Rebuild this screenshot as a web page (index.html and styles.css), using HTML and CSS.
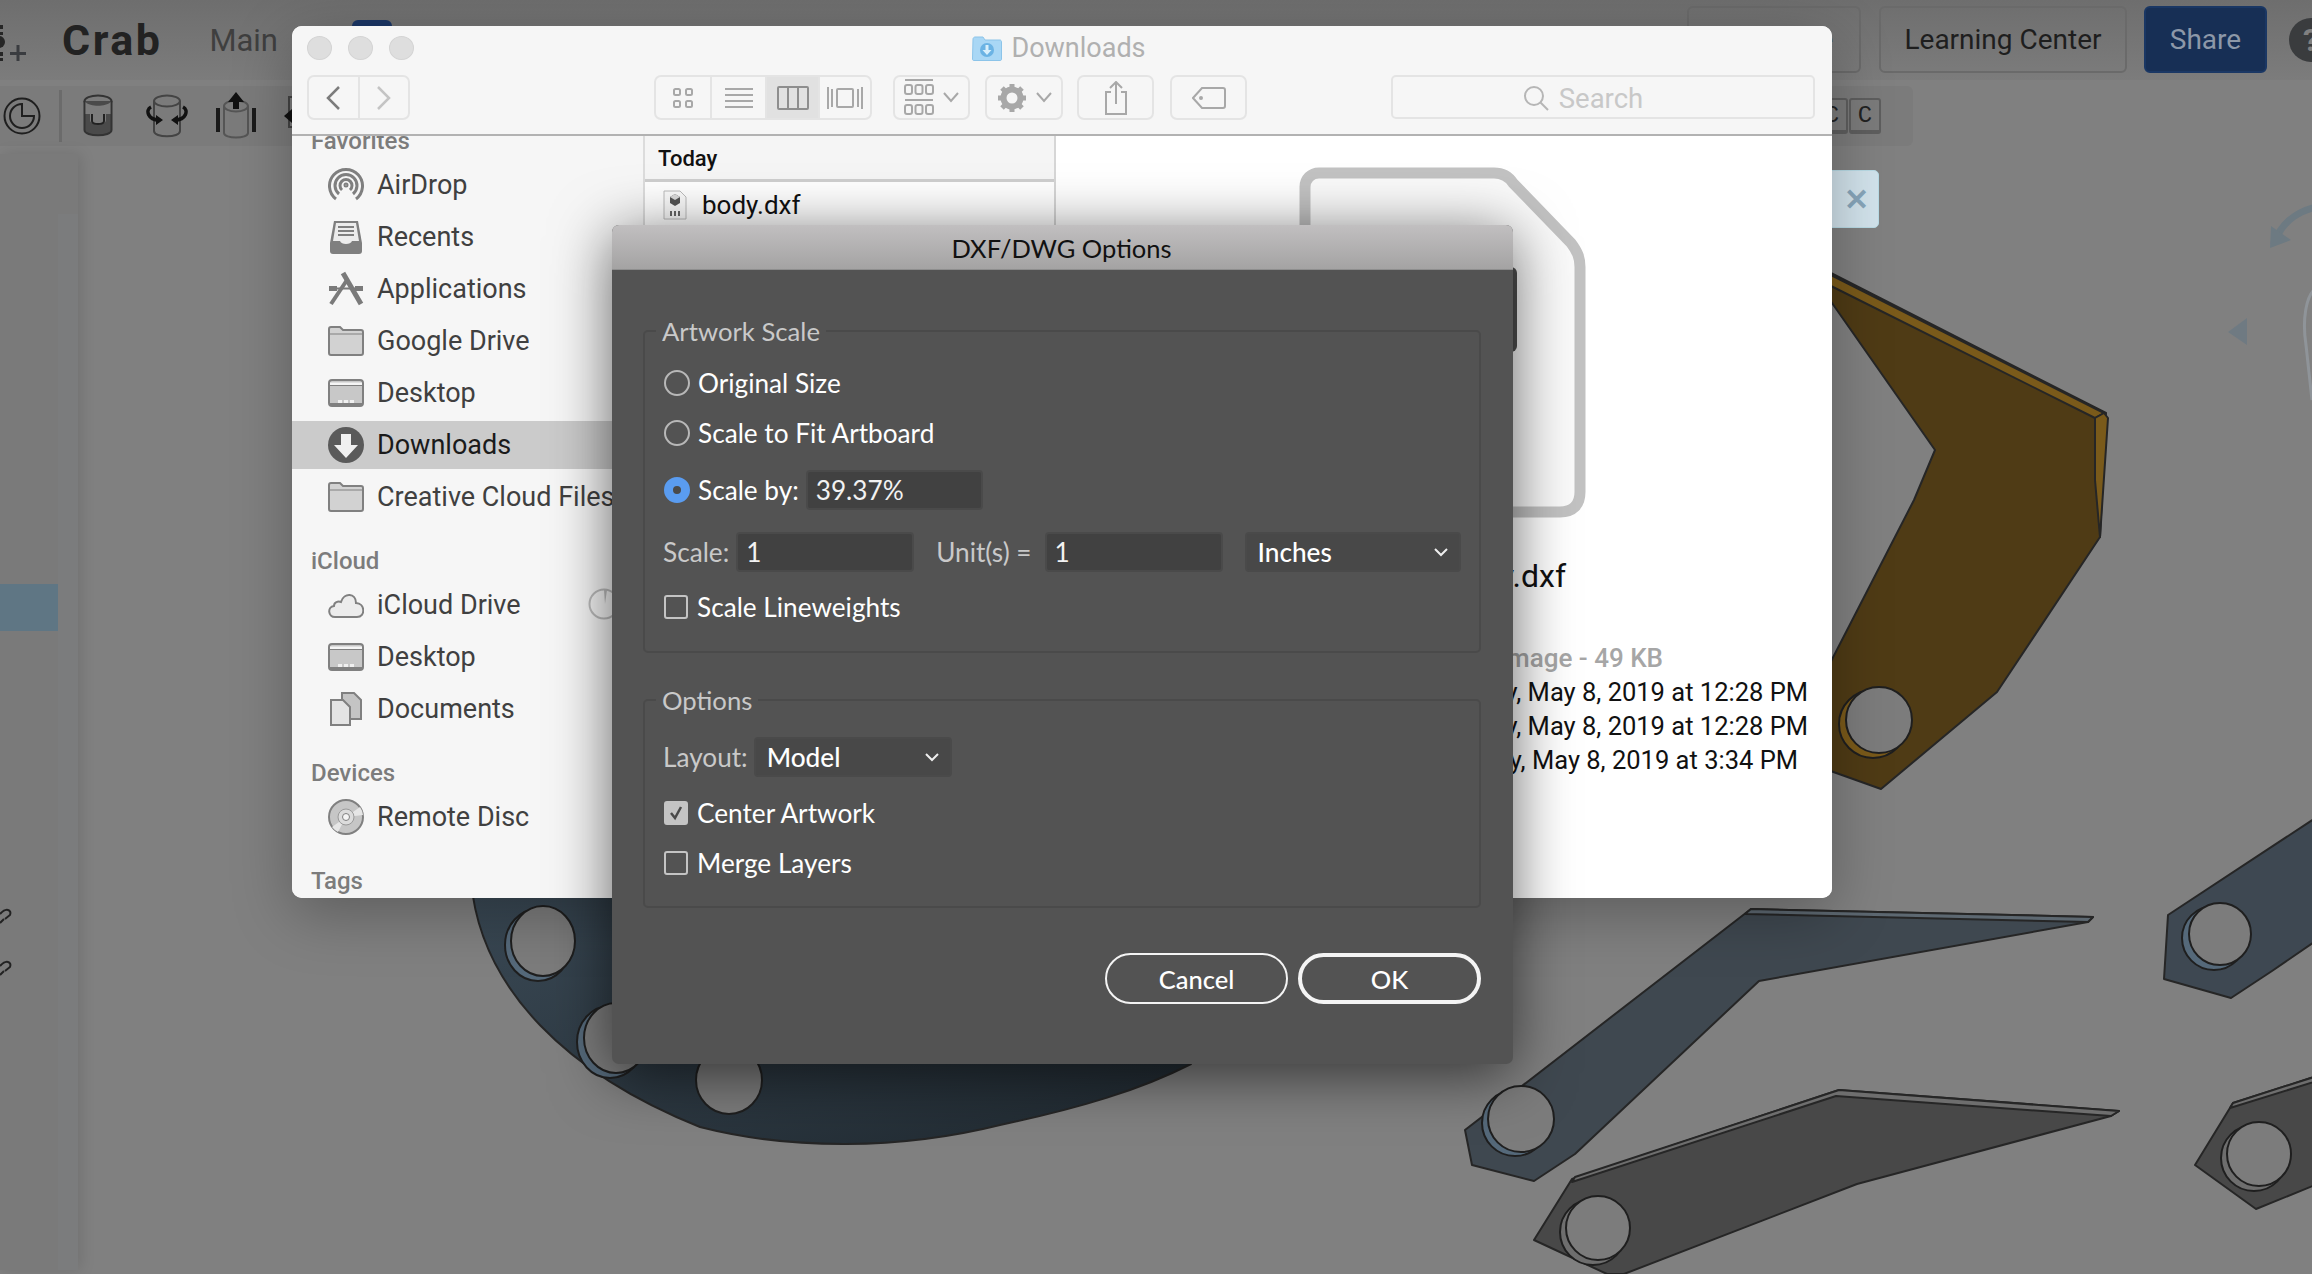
FILE: index.html
```html
<!DOCTYPE html>
<html>
  <head>
    <meta charset="utf-8">
    <title>Crab - DXF/DWG Options</title>
    <link rel="stylesheet" href="styles.css">
  </head>
  <body>
    <div class="app">
      <!-- cad canvas -->
      <svg class="canvas" width="2312" height="1274" viewBox="0 0 2312 1274">
        <defs>
          <linearGradient id="discFill" x1="0" y1="0" x2="1" y2="1">
            <stop offset="0" stop-color="#3b4a56"/>
            <stop offset="1" stop-color="#1f282f"/>
          </linearGradient>
        </defs>
        <path class="edge" fill="url(#discFill)" d="M471 880C480 990 570 1075 700 1127C790 1150 900 1150 1000 1125C1080 1108 1140 1090 1191 1064L1191 880Z"/>
        <ellipse class="crescent" cx="538" cy="945" rx="33" ry="36"/>
        <ellipse class="hole" cx="543" cy="941" rx="32" ry="35"/>
        <ellipse class="crescent" cx="610" cy="1042" rx="33" ry="36"/>
        <ellipse class="hole" cx="616" cy="1038" rx="32" ry="35"/>
        <ellipse class="hole" cx="729" cy="1080" rx="33" ry="34"/>

        <path class="edge" fill="#4f3b15" d="M1825 270L2106 413L2100 537L1997 692L1881 789L1825 769L1825 673L1914 500L1935 450L1825 293Z"/>
        <path class="edge" fill="#7a5a1a" d="M1825 272L2104 413L2095 418L1825 283Z"/>
        <path class="edge" fill="#7a5a1a" d="M2104 413L2108 418L2100 537L2095 480L2095 418Z"/>
        <circle class="crescent crescent-brown" cx="1873" cy="724" r="34"/>
        <circle class="hole" cx="1879" cy="720" r="33"/>

        <path class="edge" fill="#3f4850" d="M1751 909L2093 917L2088 922L1759 981L1575 1154L1534 1181L1472 1165L1465 1130Z"/>
        <path class="edge" fill="#5d6871" d="M1751 909L2093 917L2088 922L1745 914Z"/>
        <circle class="crescent" cx="1515" cy="1123" r="33"/>
        <circle class="hole" cx="1521" cy="1119" r="33"/>

        <path class="edge" fill="#484848" d="M1839 1090L2119 1111L2111 1116L1857 1184L1624 1274L1607 1274L1534 1240L1572 1179Z"/>
        <path class="edge" fill="#6e6e6e" d="M1839 1090L2119 1111L2111 1116L1836 1096L1572 1182L1575 1177Z"/>
        <circle class="crescent crescent-gray" cx="1593" cy="1232" r="33"/>
        <circle class="hole" cx="1598" cy="1228" r="32"/>

        <path class="edge" fill="#3e4852" d="M2320 815L2168 915L2164 979L2231 998L2272 971L2320 938Z"/>
        <circle class="crescent" cx="2214" cy="938" r="32"/>
        <circle class="hole" cx="2220" cy="934" r="31"/>

        <path class="edge" fill="#484848" d="M2320 1075L2233 1103L2195 1165L2256 1209L2320 1183Z"/>
        <path class="edge" fill="#6e6e6e" d="M2320 1075L2233 1103L2230 1108L2320 1080Z"/>
        <circle class="crescent crescent-gray" cx="2254" cy="1158" r="33"/>
        <circle class="hole" cx="2259" cy="1154" r="32"/>

        <!-- view cube bits -->
        <path fill="none" stroke="#6d7a82" stroke-width="7" d="M2316 207C2295 212 2280 225 2274 244"/>
        <path fill="#6d7a82" d="M2270 248L2271 226L2291 240Z"/>
        <path fill="#6f7a82" d="M2228 332L2247 318L2247 345Z"/>
        <path fill="none" stroke="#8f9499" stroke-width="3" d="M2316 288C2306 295 2302 320 2306 345L2312 400"/>
      </svg>

      <header class="topbar">
        <svg class="doc-glyph" width="28" height="62" viewBox="0 0 28 62">
          <circle cx="-1" cy="42" r="6" fill="#262626"/>
          <path d="M0 25h3v4H0zM0 32h3v3H0zM0 52h3v4H0zM0 58h3v3H0z" fill="#262626"/>
          <path d="M10 52h16v3H10zM16.500 45h3v16h-3z" fill="#3a3c40"/>
        </svg>
        <span class="doc-name">Crab</span>
        <span class="doc-branch">Main</span>
        <span class="doc-tab"></span>
        <div class="top-actions">
          <a class="top-btn top-btn-first">Upgrade</a>
          <a class="top-btn top-btn-learn">Learning Center</a>
          <a class="top-btn top-btn-share">Share</a>
          <span class="help">?</span>
        </div>
      </header>

      <div class="toolbar">
        <svg class="tool tool-clock" width="40" height="40" viewBox="0 0 40 40">
          <circle cx="20" cy="20" r="17.500" fill="none" stroke="#1f1f1f" stroke-width="2"/>
          <path d="M20 8A12 12 0 1 0 32 20H20Z" fill="none" stroke="#1f1f1f" stroke-width="2"/>
        </svg>
        <span class="tool-sep"></span>
        <svg class="tool tool-a" width="32" height="44" viewBox="0 0 32 44">
          <ellipse cx="16" cy="7" rx="13.500" ry="5.500" fill="none" stroke="#333" stroke-width="2"/>
          <path d="M2.500 7V36C2.500 43 29.500 43 29.500 36V7" fill="#4a4a4a" stroke="#333" stroke-width="2"/>
          <path d="M3.500 8C8 13 24 13 28.500 8V20H24V26C24 32 8 32 8 26V20H3.500Z" fill="#7c7c7c"/>
          <path d="M10 20V27C10 31 22 31 22 27V20" fill="none" stroke="#222" stroke-width="2"/>
        </svg>
        <svg class="tool tool-b" width="42" height="46" viewBox="0 0 42 46">
          <ellipse cx="21" cy="8" rx="13" ry="5.500" fill="none" stroke="#444" stroke-width="2"/>
          <path d="M8 8V38C8 45 34 45 34 38V8" fill="none" stroke="#444" stroke-width="2"/>
          <path d="M13 27C2 27-1 17 5 14M29 27C40 27 43 17 37 14" fill="none" stroke="#111" stroke-width="3.500"/>
          <path d="M10 22L17 27L10 32ZM32 22L25 27L32 32Z" fill="#111"/>
        </svg>
        <svg class="tool tool-c" width="42" height="48" viewBox="0 0 42 48">
          <ellipse cx="21" cy="14" rx="12" ry="5.500" fill="none" stroke="#555" stroke-width="2"/>
          <path d="M9 14V41C9 47 33 47 33 41V14" fill="none" stroke="#555" stroke-width="2"/>
          <path d="M1 16h4v24H1zM37 16h4v24h-4z" fill="#1a1a1a"/>
          <path d="M21 0L29 10H24V17H18V10H13Z" fill="#111"/>
        </svg>
        <svg class="tool tool-d" width="30" height="40" viewBox="0 0 30 40">
          <path d="M5 1h16v30H5z" fill="none" stroke="#444" stroke-width="2"/>
          <path d="M0 20L8 13V27Z" fill="#111"/>
        </svg>
        <div class="keys">
          <kbd class="key">C</kbd>
          <kbd class="key">C</kbd>
        </div>
      </div>

      <div class="workspace">
        <aside class="side-panel">
          <div class="side-strip"></div>
          <div class="side-active"></div>
          <svg class="side-link side-link-1" width="12" height="18" viewBox="0 0 12 18">
            <path d="M0 7C6 0 12 3 10 8L5 12M0 16L4 12" fill="none" stroke="#222" stroke-width="2"/>
          </svg>
          <svg class="side-link side-link-2" width="12" height="18" viewBox="0 0 12 18">
            <path d="M0 7C6 0 12 3 10 8L5 12M0 16L4 12" fill="none" stroke="#222" stroke-width="2"/>
          </svg>
        </aside>
      </div>

      <div class="notice-close"><span>&#10005;</span></div>

      <!-- finder window -->
      <div class="finder">
        <div class="finder-head">
          <div class="titlerow">
            <div class="lights"><i></i><i></i><i></i></div>
            <svg width="30" height="25" viewBox="0 0 30 25">
              <path d="M1 3C1 2 2 1 3 1H11L13 4H28C29 4 29.500 5 29.500 6V23C29.500 24 29 24.500 28 24.500H2C1 24.500 .5 24 .5 23Z" fill="#a9d7f5" stroke="#8cc4e9"/>
              <circle cx="15" cy="14" r="7" fill="#6bb3e4"/>
              <path d="M13.500 9h3v5h3L15 19L10.500 14h3Z" fill="#d8effc"/>
            </svg>
            <span class="wintitle">Downloads</span>
          </div>
          <div class="tools">
            <div class="seg nav">
              <span class="seg-item nav-btn">
                <svg width="16" height="26" viewBox="0 0 16 26"><path d="M14 2L3 13L14 24" fill="none" stroke="#7c7c7c" stroke-width="2.500"/></svg>
              </span>
              <span class="seg-item nav-btn">
                <svg width="16" height="26" viewBox="0 0 16 26"><path d="M2 2L13 13L2 24" fill="none" stroke="#c4c4c4" stroke-width="2.500"/></svg>
              </span>
            </div>
            <div class="seg views">
              <span class="seg-item view-a">
                <svg width="22" height="22" viewBox="0 0 22 22" fill="none" stroke="#a8a8a8" stroke-width="2"><rect x="2" y="2" width="6" height="6" rx="1.500"/><rect x="14" y="2" width="6" height="6" rx="1.500"/><rect x="2" y="14" width="6" height="6" rx="1.500"/><rect x="14" y="14" width="6" height="6" rx="1.500"/></svg>
              </span>
              <span class="seg-item view-b">
                <svg width="30" height="22" viewBox="0 0 30 22" stroke="#a8a8a8" stroke-width="2"><path d="M1 2h28M1 8h28M1 14h28M1 20h28"/></svg>
              </span>
              <span class="seg-item view-c is-on">
                <svg width="32" height="24" viewBox="0 0 32 24" fill="none" stroke="#8e8e8e" stroke-width="2"><rect x="1" y="1" width="30" height="22" rx="1"/><path d="M11 1v22M21 1v22"/></svg>
              </span>
              <span class="seg-item view-d">
                <svg width="36" height="24" viewBox="0 0 36 24" fill="none" stroke="#a8a8a8" stroke-width="2"><rect x="10" y="3" width="16" height="18" rx="1"/><path d="M1 1v22M5 3v18M35 1v22M31 3v18"/></svg>
              </span>
            </div>
            <div class="seg tool-btn arrange">
              <svg width="30" height="44" viewBox="0 0 30 44" fill="none" stroke="#a8a8a8" stroke-width="2"><path d="M1 4h28M1 24h28"/><rect x="1" y="9" width="7" height="9" rx="2"/><rect x="11.500" y="9" width="7" height="9" rx="2"/><rect x="22" y="9" width="7" height="9" rx="2"/><rect x="1" y="29" width="7" height="9" rx="2"/><rect x="11.500" y="29" width="7" height="9" rx="2"/><rect x="22" y="29" width="7" height="9" rx="2"/></svg>
              <svg width="16" height="11" viewBox="0 0 16 11"><path d="M1 1L8 9L15 1" fill="none" stroke="#a8a8a8" stroke-width="2"/></svg>
            </div>
            <div class="seg tool-btn action">
              <svg width="30" height="30" viewBox="0 0 30 30">
                <circle cx="15" cy="15" r="8.500" fill="none" stroke="#a8a8a8" stroke-width="6"/>
                <path d="M15 1v28M1 15h28M5 5l20 20M25 5L5 25" stroke="#a8a8a8" stroke-width="5"/>
                <circle cx="15" cy="15" r="5.500" fill="#f6f6f6"/>
              </svg>
              <svg width="16" height="11" viewBox="0 0 16 11"><path d="M1 1L8 9L15 1" fill="none" stroke="#a8a8a8" stroke-width="2"/></svg>
            </div>
            <div class="seg tool-btn share">
              <svg width="24" height="34" viewBox="0 0 24 34" fill="none" stroke="#a8a8a8" stroke-width="2"><path d="M7 11H2V33H22V11H17M12 23V1M6 7L12 1L18 7"/></svg>
            </div>
            <div class="seg tool-btn tag">
              <svg width="34" height="22" viewBox="0 0 34 22" fill="none" stroke="#a8a8a8" stroke-width="2"><path d="M10 1H31C32 1 33 2 33 3V19C33 20 32 21 31 21H10L1 11Z"/><circle cx="9" cy="11" r="1"/></svg>
            </div>
            <div class="search">
              <svg width="26" height="26" viewBox="0 0 26 26" fill="none" stroke="#b6b6b6" stroke-width="2"><circle cx="11" cy="11" r="9"/><path d="M17 17L25 25"/></svg>
              <span>Search</span>
            </div>
          </div>
        </div>

        <div class="finder-body">
          <nav class="sidebar">
            <h4 class="side-head side-head-first">Favorites</h4>
            <div class="side-item">
              <svg class="side-icon" width="36" height="36" viewBox="0 0 36 36" fill="none" stroke="#7f7f7f" stroke-width="3">
                <path d="M8 32A16.500 16.500 0 1 1 28 32"/>
                <path d="M11 27A11 11 0 1 1 25 27"/>
                <path d="M14 23A6 6 0 1 1 22 23"/>
                <circle cx="18" cy="18" r="1.500" stroke-width="2"/>
              </svg>
              <span>AirDrop</span>
            </div>
            <div class="side-item">
              <svg class="side-icon" width="36" height="36" viewBox="0 0 36 36">
                <path d="M6 2H30L34 24V32C34 34 33 35 31 35H5C3 35 2 34 2 32V24Z" fill="#7f7f7f"/>
                <path d="M8 4H28L31 22H24C23 26 13 26 12 22H5Z" fill="#ececec"/>
                <path d="M10 8h16M10 12h16M10 16h16" stroke="#7f7f7f" stroke-width="2"/>
              </svg>
              <span>Recents</span>
            </div>
            <div class="side-item">
              <svg class="side-icon" width="36" height="36" viewBox="0 0 36 36" fill="none" stroke="#7a7a7a">
                <path d="M1 17.500H9M27 17.500H35" stroke-width="5"/>
                <path d="M9 17.500H27" stroke-width="2"/>
                <path d="M15 2L33 33" stroke-width="5"/>
                <path d="M19 9L3 33" stroke-width="4"/>
              </svg>
              <span>Applications</span>
            </div>
            <div class="side-item">
              <svg class="side-icon" width="36" height="30" viewBox="0 0 36 30">
                <path d="M1 3C1 2 1.500 1 3 1H12L15 4H33C34 4 35 5 35 6V27C35 28 34 29 33 29H3C2 29 1 28 1 27Z" fill="#d2d2d2" stroke="#808080" stroke-width="2"/>
                <path d="M2 8H34" stroke="#808080"/>
              </svg>
              <span>Google Drive</span>
            </div>
            <div class="side-item">
              <svg class="side-icon" width="36" height="28" viewBox="0 0 36 28">
                <rect x="1" y="1" width="34" height="26" rx="3" fill="#c8c8c8" stroke="#808080" stroke-width="2"/>
                <path d="M2 5h32" stroke="#f5f5f5" stroke-width="3"/>
                <path d="M2 24h32v2H2zM2 6h32v1H2z" fill="#808080"/>
                <path d="M10 21h4v3h-4zM16 21h4v3h-4zM22 21h4v3h-4z" fill="#f0f0f0"/>
              </svg>
              <span>Desktop</span>
            </div>
            <div class="side-item is-current">
              <svg class="side-icon" width="36" height="36" viewBox="0 0 36 36">
                <circle cx="18" cy="18" r="18" fill="#5a5a5a"/>
                <path d="M13 7h10v11h7L18 31L6 18h7Z" fill="#f0f0f0"/>
              </svg>
              <span>Downloads</span>
            </div>
            <div class="side-item">
              <svg class="side-icon" width="36" height="30" viewBox="0 0 36 30">
                <path d="M1 3C1 2 1.500 1 3 1H12L15 4H33C34 4 35 5 35 6V27C35 28 34 29 33 29H3C2 29 1 28 1 27Z" fill="#d2d2d2" stroke="#808080" stroke-width="2"/>
                <path d="M2 8H34" stroke="#808080"/>
              </svg>
              <span>Creative Cloud Files</span>
            </div>

            <h4 class="side-head">iCloud</h4>
            <div class="side-item">
              <svg class="side-icon" width="36" height="26" viewBox="0 0 36 26">
                <path d="M7 25C0 25-1 15 6 14C6 10 10 9 13 10C16 0 28 1 28 11C37 11 38 25 29 25Z" fill="#ececec" stroke="#808080" stroke-width="2"/>
              </svg>
              <span>iCloud Drive</span>
              <svg class="sync" width="36" height="32" viewBox="0 0 36 32">
                <circle cx="17" cy="16" r="14.500" fill="none" stroke="#bdbdbd" stroke-width="2"/>
                <path d="M17 2L18 16L20 2Z" fill="#bdbdbd"/>
              </svg>
            </div>
            <div class="side-item">
              <svg class="side-icon" width="36" height="28" viewBox="0 0 36 28">
                <rect x="1" y="1" width="34" height="26" rx="3" fill="#c8c8c8" stroke="#808080" stroke-width="2"/>
                <path d="M2 5h32" stroke="#f5f5f5" stroke-width="3"/>
                <path d="M2 24h32v2H2zM2 6h32v1H2z" fill="#808080"/>
                <path d="M10 21h4v3h-4zM16 21h4v3h-4zM22 21h4v3h-4z" fill="#f0f0f0"/>
              </svg>
              <span>Desktop</span>
            </div>
            <div class="side-item">
              <svg class="side-icon" width="36" height="34" viewBox="0 0 36 34">
                <path d="M14 1H26L33 8V27H14Z" fill="#c4c4c4" stroke="#808080" stroke-width="2"/>
                <path d="M3 8H15L22 15V33H3Z" fill="#e4e4e4" stroke="#808080" stroke-width="2"/>
              </svg>
              <span>Documents</span>
            </div>

            <h4 class="side-head">Devices</h4>
            <div class="side-item">
              <svg class="side-icon" width="36" height="36" viewBox="0 0 36 36">
                <circle cx="18" cy="18" r="17" fill="#c6c6c6" stroke="#808080" stroke-width="2"/>
                <path d="M18 18L32 8A17 17 0 0 1 35 16ZM18 18L4 28A17 17 0 0 0 10 33Z" fill="#e6e6e6"/>
                <circle cx="18" cy="18" r="8" fill="#dcdcdc" stroke="#9a9a9a"/>
                <circle cx="18" cy="18" r="3.500" fill="#f5f5f5" stroke="#808080"/>
              </svg>
              <span>Remote Disc</span>
            </div>

            <h4 class="side-head">Tags</h4>
          </nav>

          <section class="files">
            <div class="files-head">Today</div>
            <div class="file-row">
              <svg width="24" height="30" viewBox="0 0 24 30">
                <path d="M1 1H17L23 7V29H1Z" fill="#fbfbfb" stroke="#bcbcbc"/>
                <path d="M12 4L17 7V13L12 16L7 13V7Z" fill="#555"/>
                <path d="M12 4L17 7L12 10L7 7Z" fill="#ddd"/>
                <path d="M7 21h2v5H7zM11 21h2v5h-2zM15 21h2v5h-2z" fill="#666"/>
              </svg>
              <span>body.dxf</span>
            </div>
          </section>

          <section class="preview">
            <svg class="preview-icon" width="290" height="354" viewBox="0 0 290 354">
              <path d="M20 6H195C204 6 210 10 214 16L272 76C278 84 281 90 281 100V325C281 338 274 345 261 345H20C12 345 6 339 6 331V20C6 12 12 6 20 6Z" fill="#fafafa" stroke="#c2c2c2" stroke-width="11"/>
              <rect x="100" y="100" width="118" height="85" rx="6" fill="#4f4f4f"/>
            </svg>
            <div class="preview-name">body.dxf</div>
            <div class="preview-kind">Image - 49 KB</div>
            <div class="preview-date">Today, May 8, 2019 at 12:28 PM</div>
            <div class="preview-date">Today, May 8, 2019 at 12:28 PM</div>
            <div class="preview-date preview-date-last">Today, May 8, 2019 at 3:34 PM</div>
          </section>
        </div>
      </div>

      <!-- illustrator dialog -->
      <div class="dialog">
        <div class="dialog-title">DXF/DWG Options</div>
        <div class="dialog-body">
          <fieldset class="group group-scale">
            <legend>Artwork Scale</legend>
            <label class="row row-1"><i class="radio"></i><span>Original Size</span></label>
            <label class="row row-2"><i class="radio"></i><span>Scale to Fit Artboard</span></label>
            <label class="row row-3"><i class="radio is-on"></i><span>Scale by:</span><b class="field field-pct">39.37%</b></label>
            <div class="row row-4">
              <span class="lbl">Scale:</span><b class="field field-num">1</b>
              <span class="lbl lbl-unit">Unit(s) =</span><b class="field field-num">1</b>
              <b class="field field-select select-units">Inches
                <svg width="14" height="9" viewBox="0 0 14 9"><path d="M1 1L7 7L13 1" fill="none" stroke="#eee" stroke-width="2"/></svg>
              </b>
            </div>
            <label class="row row-5"><i class="check"></i><span>Scale Lineweights</span></label>
          </fieldset>

          <fieldset class="group group-options">
            <legend>Options</legend>
            <div class="row row-6">
              <span class="lbl">Layout:</span>
              <b class="field field-select select-layout">Model
                <svg width="14" height="9" viewBox="0 0 14 9"><path d="M1 1L7 7L13 1" fill="none" stroke="#eee" stroke-width="2"/></svg>
              </b>
            </div>
            <label class="row row-7">
              <i class="check is-on">
                <svg width="16" height="16" viewBox="0 0 16 16"><path d="M3 8L7 13L13 2" fill="none" stroke="#4a4a4a" stroke-width="2.500"/></svg>
              </i>
              <span>Center Artwork</span>
            </label>
            <label class="row row-8"><i class="check"></i><span>Merge Layers</span></label>
          </fieldset>

          <div class="dialog-actions">
            <button class="pill">Cancel</button>
            <button class="pill pill-default">OK</button>
          </div>
        </div>
      </div>
    </div>
  </body>
</html>
```

FILE: styles.css
```css
* { box-sizing: border-box; }
html, body { margin: 0; padding: 0; }
body { width: 2312px; height: 1274px; overflow: hidden; font-family: Roboto, "Liberation Sans", sans-serif; }

.app { position: relative; width: 2312px; height: 1274px; overflow: hidden; background: #808080; }
.canvas { position: absolute; left: 0; top: 0; }
.edge { stroke: #262626; stroke-width: 2; stroke-linejoin: round; }
.hole { fill: #7c7c7c; stroke: #1f1f1f; stroke-width: 2; }
.crescent { fill: #55697a; stroke: #1f1f1f; stroke-width: 2; }
.crescent-brown { fill: #7a5a1a; }
.crescent-gray { fill: #6e6e6e; }

/* onshape top bar */
.topbar { position: relative; display: flex; align-items: center; height: 80px; background: linear-gradient(#6e6e6e, #7c7c7c); }
.doc-glyph { flex: none; align-self: flex-start; }
.doc-name { margin-left: 34px; font-size: 43px; font-weight: 700; letter-spacing: 2.500px; color: #222; }
.doc-branch { margin-left: 47px; font-size: 31px; color: #3f3f3f; }
.doc-tab { width: 40px; height: 20px; margin-left: 74px; align-self: flex-start; margin-top: 20px; background: #1b3665; border-radius: 6px 6px 0 0; }
.top-actions { display: flex; align-items: center; margin-left: auto; height: 67px; align-self: flex-start; margin-top: 6px; }
.top-btn { display: flex; align-items: center; justify-content: center; height: 67px; border: 2px solid #6a6a6a; border-radius: 6px; font-size: 28px; color: #1e1e1e; }
.top-btn-first { width: 174px; justify-content: flex-end; padding-right: 26px; }
.top-btn-learn { width: 248px; margin-left: 18px; }
.top-btn-share { width: 123px; margin-left: 17px; background: #172f55; border-color: #1a3764; color: #8d98a8; }
.help { display: flex; align-items: center; justify-content: center; width: 44px; height: 44px; margin-left: 22px; margin-right: -21px; border-radius: 50%; background: #3a3c3e; color: #808080; font-size: 32px; font-weight: 700; }

.toolbar { position: relative; display: flex; align-items: center; width: 1913px; height: 60px; margin-top: 6px; background: #7b7b7b; border-radius: 0 6px 6px 0; }
.tool { flex: none; }
.tool-clock { margin-left: 2px; }
.tool-sep { width: 3px; height: 52px; margin-left: 17px; background: #6b6b6b; }
.tool-a { margin-left: 20px; }
.tool-b { margin-left: 32px; }
.tool-c { margin-left: 27px; }
.tool-d { margin-left: 27px; }
.keys { display: flex; gap: 1px; margin-left: auto; margin-right: 32px; }
.key { display: flex; align-items: center; justify-content: center; width: 32px; height: 36px; border: 2px solid #5e5e5e; border-bottom-width: 4px; border-radius: 3px; font-family: "Liberation Mono", monospace; font-size: 24px; color: #222; }

.workspace { display: flex; height: 1128px; }
.side-panel { position: relative; width: 78px; height: 1116px; margin-top: 8px; background: #7a7a7a; box-shadow: 3px 0 14px rgba(0,0,0,.12); }
.side-strip { position: absolute; right: 0; top: 60px; bottom: 0; width: 20px; background: #7b7c7d; }
.side-active { position: absolute; left: 0; top: 430px; width: 58px; height: 47px; background: #5f7684; }
.side-link { position: absolute; left: 0; }
.side-link-1 { top: 753px; }
.side-link-2 { top: 805px; }

.notice-close { position: absolute; left: 1780px; top: 170px; display: flex; align-items: center; justify-content: flex-end; width: 99px; height: 58px; padding-right: 9px; background: #d2e3ec; border: 1px solid #b9dbe6; border-radius: 5px; color: #88a6bb; font-size: 30px; font-weight: 700; }

/* finder window */
.finder { position: absolute; left: 292px; top: 26px; display: flex; flex-direction: column; width: 1540px; height: 872px; background: #fff; border-radius: 10px; overflow: hidden; box-shadow: 0 16px 60px rgba(0,0,0,.28); }
.finder-head { flex: none; height: 110px; background: #f6f6f6; border-bottom: 2px solid #b2b2b2; }
.titlerow { position: relative; display: flex; align-items: center; justify-content: center; gap: 9px; height: 44px; padding-right: 6px; margin-bottom: 5px; }
.lights { position: absolute; left: 15px; top: 10px; display: flex; gap: 16px; }
.lights i { width: 25px; height: 24px; border-radius: 50%; background: #dedede; border: 1px solid #d4d4d4; }
.wintitle { font-size: 27px; color: #b0b0b0; }
.tools { display: flex; align-items: flex-start; height: 45px; padding-left: 15px; padding-right: 17px; }
.seg { display: flex; align-items: center; height: 45px; background: #f6f6f6; border: 2px solid #e4e4e4; border-radius: 7px; overflow: hidden; }
.seg-item { display: flex; align-items: center; justify-content: center; height: 100%; }
.nav { width: 103px; }
.nav-btn { flex: 1; }
.nav-btn + .nav-btn { border-left: 2px solid #e4e4e4; }
.views { width: 218px; margin-left: 244px; }
.view-a { width: 56px; border-right: 2px solid #e4e4e4; }
.view-b { width: 55px; border-right: 2px solid #e4e4e4; }
.view-c { width: 51px; }
.view-d { flex: 1; border-left: 2px solid #e4e4e4; }
.is-on { background: #e1e1e1; }
.tool-btn { justify-content: center; width: 77px; gap: 9px; }
.arrange { margin-left: 21px; }
.action { margin-left: 15px; width: 78px; }
.share { margin-left: 14px; }
.tag { margin-left: 16px; }
.search { display: flex; align-items: center; justify-content: center; gap: 10px; width: 424px; height: 44px; margin-left: auto; padding: 2px 40px 0 0; border: 2px solid #e4e4e4; border-radius: 5px; font-size: 27.500px; color: #c8c8c8; }

.finder-body { display: flex; flex: 1; min-height: 0; }
.sidebar { flex: none; width: 353px; padding-left: 19px; background: #f6f6f6; overflow: hidden; border-right: 2px solid #dcdcdc; }
.side-head { height: 32px; margin: 24px 0 4px; font-size: 24px; line-height: 32px; font-weight: 500; color: #7c7c7c; }
.side-head-first { margin-top: -11px; }
.side-item { position: relative; display: flex; align-items: center; height: 48px; margin-bottom: 4px; margin-left: -19px; padding-left: 36px; font-size: 27px; color: #404040; white-space: nowrap; }
.side-item.is-current { background: #cbcbcb; color: #1a1a1a; }
.side-icon { flex: none; }
.side-item span { position: absolute; left: 85px; }
.sync { position: absolute; left: 295px; top: 7px; }

.files { flex: none; width: 411px; background: #fff; border-right: 2px solid #d6d6d6; }
.files-head { height: 46px; padding-left: 13px; background: #f5f5f5; border-bottom: 3px solid #cfcfcf; font-size: 22px; font-weight: 500; line-height: 45px; color: #111; }
.file-row { display: flex; align-items: center; gap: 15px; height: 46px; padding-left: 18px; font-size: 26px; color: #111; }

.preview { flex: 1; min-width: 0; background: #fff; font-size: 25.500px; color: #111; text-align: right; padding-right: 24px; }
.preview-icon { display: block; margin: 31px 0 0 243px; }
.preview-name { margin: 35px 242px 0 0; font-size: 32px; line-height: 40px; }
.preview-kind { margin: 45px 145px 0 0; line-height: 34px; font-size: 26px; color: #a6a6a6; font-weight: 500; }
.preview-date { line-height: 34px; }
.preview-date-last { margin-right: 10px; }

/* dialog */
.dialog { position: absolute; left: 612px; top: 225px; display: flex; flex-direction: column; width: 901px; height: 839px; background: #535353; border-radius: 7px; box-shadow: 0 10px 60px rgba(0,0,0,.6); font-family: Lato, "Liberation Sans", sans-serif; overflow: hidden; }
.dialog-title { flex: none; height: 45px; background: linear-gradient(#c1bfc0, #a4a3a3); border-bottom: 1px solid #8e8e8e; text-align: center; font-size: 25.500px; line-height: 46px; color: #111; padding-right: 2px; }
.dialog-body { flex: 1; padding: 46px 32px 0 31px; }
.group { margin: 0; padding: 0 18px; border: 2px solid #4a4a4a; border-radius: 5px; }
.group legend { margin-left: -7px; padding: 0 6px; font-size: 25.700px; line-height: 30px; color: #c9c9c9; }
.group-scale { padding-bottom: 24px; }
.group-options { margin-top: 32px; padding-bottom: 23px; }
.row { display: flex; align-items: center; height: 40px; gap: 9px; font-size: 26.200px; color: #fff; white-space: nowrap; }
.row-1 { margin-top: 17px; }
.row-2 { margin-top: 10px; }
.row-3 { margin-top: 17px; }
.row-4 { margin-top: 22px; }
.row-5 { margin-top: 15px; }
.row-6 { margin-top: 22px; }
.row-7 { margin-top: 16px; }
.row-8 { margin-top: 10px; }
.radio { flex: none; width: 26px; height: 26px; margin-left: 1px; margin-right: -1px; border: 2px solid #b8b8b8; border-radius: 50%; }
.radio.is-on { border: 9px solid #5a9cf0; background-color: #4a4a4a; }
.check { display: flex; align-items: center; justify-content: center; flex: none; width: 24px; height: 24px; margin-left: 1px; border: 2px solid #c4c4c4; border-radius: 3px; }
.check.is-on { background: #c4c4c4; }
.field { display: flex; align-items: center; flex: none; height: 40px; margin-left: -3px; padding-left: 8px; background: #414141; border: 2px solid #4a4a4a; border-radius: 4px; font-weight: 400; color: #f2f2f2; }
.field-pct { width: 177px; margin-left: -2px; }
.field-num { width: 178px; margin-left: -2px; }
.field-select { justify-content: space-between; padding: 0 11px 0 11px; background: #484848; font-weight: 500; color: #fff; }
.lbl { color: #c9c9c9; flex: none; }
.lbl-unit { margin-left: 13px; margin-right: 6px; }
.select-units { width: 216px; margin-left: 13px; }
.select-layout { width: 198px; }
.dialog-actions { display: flex; justify-content: flex-end; gap: 10px; margin-top: 45px; }
.pill { width: 183px; height: 51px; padding: 0; background: transparent; border: 2px solid #f4f4f4; border-radius: 26px; font-family: Lato, sans-serif; font-size: 25.500px; font-weight: 500; color: #fff; }
.pill-default { border-width: 4px; }
```
